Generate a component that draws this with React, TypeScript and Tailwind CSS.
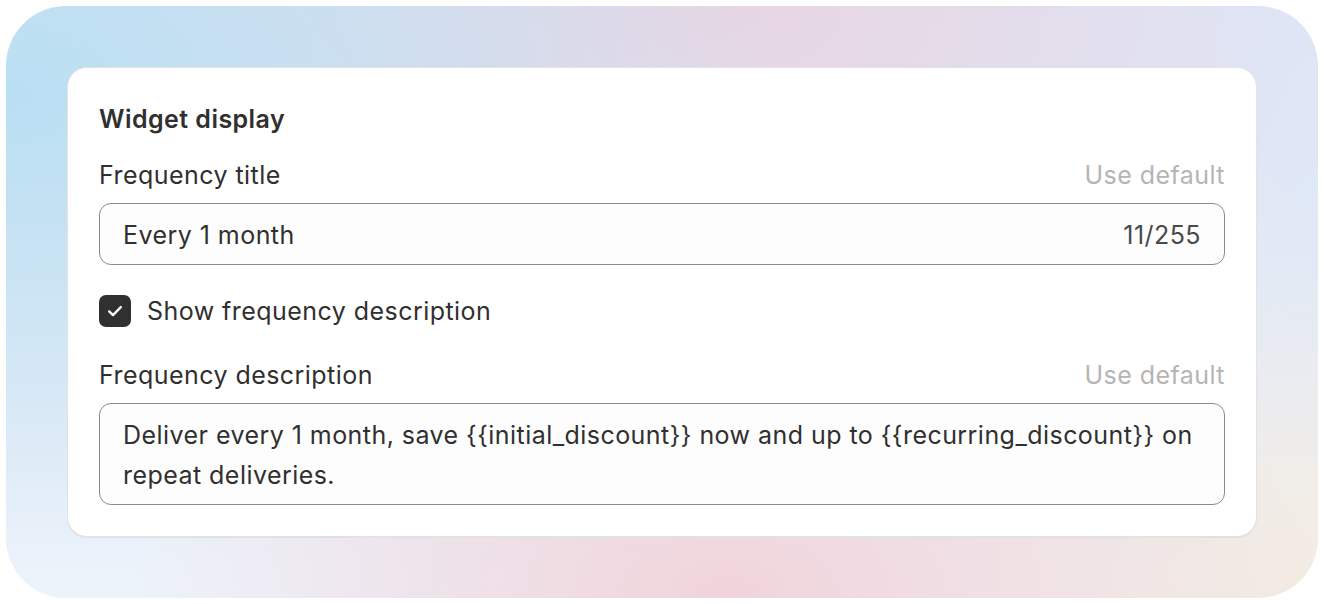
import React from "react";

export default function App() {
  return (
    <div className="w-[1324px] h-[604px] bg-white p-[6px] font-['Inter','Noto_Sans',sans-serif] text-[#303030] text-[25px] tracking-[0.45px]">
      <div className="w-[1312px] h-[592px] rounded-[60px] p-[61px] bg-[radial-gradient(ellipse_60%_80%_at_0%_15%,#b9dff3_0%,rgba(185,223,243,0)_100%),radial-gradient(ellipse_50%_70%_at_55%_0%,#e8d5e3_0%,rgba(232,213,227,0)_100%),radial-gradient(ellipse_45%_80%_at_100%_0%,#dde8f9_0%,rgba(221,232,249,0)_100%),radial-gradient(ellipse_45%_60%_at_55%_100%,#f1d3da_0%,rgba(241,211,218,0)_100%),radial-gradient(ellipse_40%_70%_at_100%_100%,#f3ebe1_0%,rgba(243,235,225,0)_100%),linear-gradient(180deg,#dfe4f0_0%,#edf3fb_100%)]">
        <div className="w-[1190px] bg-white rounded-[20px] border border-[#e3e3e3] shadow-[0_1px_0_#e0e0e0] px-[31px] pt-[35px] pb-[31px] flex flex-col">
          <div className="leading-[32px] font-semibold">Widget display</div>

          <div className="mt-[24px] flex justify-between leading-[32px]">
            <span>Frequency title</span>
            <span className="text-[#b5b5b5]">Use default</span>
          </div>

          <div className="mt-[12px] h-[62px] rounded-[12px] border border-[#8a8a8a] bg-[#fdfdfd] px-[23px] pt-[3px] flex items-center justify-between">
            <span>Every 1 month</span>
            <span className="text-[#4a4a4a]">11/255</span>
          </div>

          <div className="mt-[30px] flex items-center gap-[16px] h-[32px]">
            <div className="w-[32px] h-[32px] rounded-[7px] bg-[#303030] flex items-center justify-center">
              <svg width="32" height="32" viewBox="0 0 32 32" fill="none">
                <path d="M10.2 16.4 L14 20.1 L21.8 12.1" stroke="white" strokeWidth="2.4" strokeLinecap="round" strokeLinejoin="round" />
              </svg>
            </div>
            <span className="leading-[32px]">Show frequency description</span>
          </div>

          <div className="mt-[32px] flex justify-between leading-[32px]">
            <span>Frequency description</span>
            <span className="text-[#b5b5b5]">Use default</span>
          </div>

          <div className="mt-[12px] h-[102px] rounded-[12px] border border-[#8a8a8a] bg-[#fdfdfd] px-[23px] pt-[11px] leading-[40px]">
            Deliver every 1 month, save {"{{initial_discount}}"} now and up to {"{{recurring_discount}}"} on repeat deliveries.
          </div>
        </div>
      </div>
    </div>
  );
}
